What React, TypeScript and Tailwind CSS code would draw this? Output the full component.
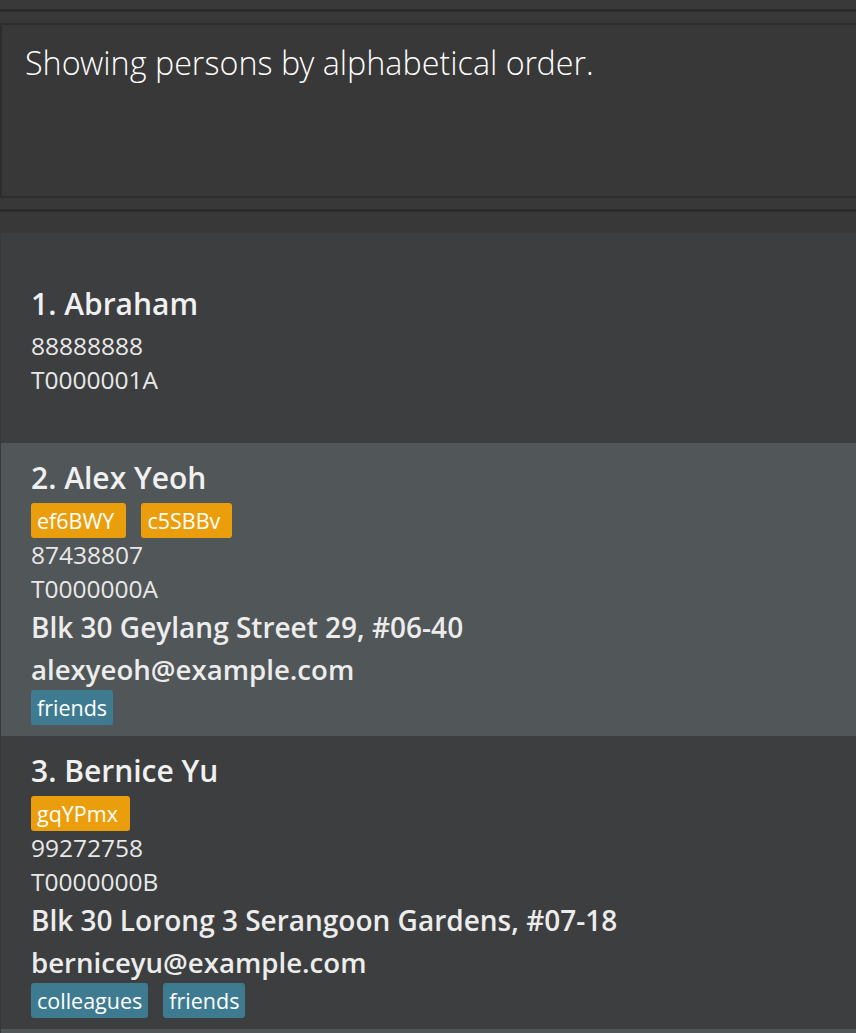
import React from "react";

type Person = {
  name: string;
  codes: string[];
  phone: string;
  nric: string;
  address?: string;
  email?: string;
  tags: string[];
};

const people: Person[] = [
  { name: "1. Abraham", codes: [], phone: "88888888", nric: "T0000001A", tags: [] },
  {
    name: "2. Alex Yeoh",
    codes: ["ef6BWY", "c5SBBv"],
    phone: "87438807",
    nric: "T0000000A",
    address: "Blk 30 Geylang Street 29, #06-40",
    email: "alexyeoh@example.com",
    tags: ["friends"],
  },
  {
    name: "3. Bernice Yu",
    codes: ["gqYPmx"],
    phone: "99272758",
    nric: "T0000000B",
    address: "Blk 30 Lorong 3 Serangoon Gardens, #07-18",
    email: "berniceyu@example.com",
    tags: ["colleagues", "friends"],
  },
];

const font = { fontFamily: '"Open Sans", "Noto Sans", sans-serif' };
const lightFont = {
  fontFamily: '"Open Sans Light", "Noto Sans Light", "Open Sans", "Noto Sans", sans-serif',
};

function Card({ p, odd }: { p: Person; odd: boolean }) {
  const short = !p.address;
  return (
    <div
      className={`flex flex-col px-[30px] ${odd ? "bg-[#515658]" : "bg-[#3c3e3f]"} ${
        short ? "pt-[51px] pb-[46px]" : "pt-[15px] pb-[11px]"
      }`}
    >
      <div className="h-[40px] text-[30px] font-semibold leading-[40px] text-[#f0f0f0] whitespace-nowrap">
        {p.name}
      </div>
      <div className="mt-[5px] flex gap-[15px]">
        {p.codes.map((c) => (
          <span
            key={c}
            className="h-[35px] rounded-[3px] bg-[#eb9e0c] pl-[6px] pr-[12px] text-[21.5px] leading-[35px] text-white"
          >
            {c}
          </span>
        ))}
      </div>
      <div className="text-[24.5px] leading-[34px] text-[#e8e8e8]">{p.phone}</div>
      <div className="text-[24.5px] leading-[34px] text-[#e8e8e8]">{p.nric}</div>
      {p.address && (
        <div className="text-[28px] font-semibold leading-[42px] text-[#ececec] whitespace-nowrap">
          {p.address}
        </div>
      )}
      {p.email && (
        <div className="text-[27.6px] font-semibold leading-[42px] text-[#ececec] whitespace-nowrap">
          {p.email}
        </div>
      )}
      {p.tags.length > 0 && (
        <div className="flex gap-[15px]">
          {p.tags.map((t) => (
            <span
              key={t}
              className="h-[35px] rounded-[3px] bg-[#3e7b91] px-[6px] text-[21.5px] leading-[35px] text-white"
            >
              {t}
            </span>
          ))}
        </div>
      )}
    </div>
  );
}

export default function App() {
  return (
    <div className="flex h-[1033px] w-[856px] flex-col overflow-hidden bg-[#383838]" style={font}>
      <div className="h-[9px] shrink-0 bg-[#393939]" />
      <div className="h-[3px] shrink-0 bg-[#2b2b2b]" />
      <div className="h-[11px] shrink-0" />
      <div className="h-[175px] shrink-0 border-y-2 border-l-2 border-[#2d2d2d] bg-[#383838] pl-[23px] pt-[12px]">
        <div
          className="text-[32.3px] font-light leading-[50px] text-white whitespace-nowrap"
          style={lightFont}
        >
          Showing persons by alphabetical order.
        </div>
      </div>
      <div className="h-[11px] shrink-0" />
      <div className="h-[3px] shrink-0 bg-[#2b2b2b]" />
      <div className="h-[21px] shrink-0" />
      <div className="flex flex-col border-l border-[#383838]">
        {people.map((p, i) => (
          <Card key={p.name} p={p} odd={i % 2 === 1} />
        ))}
        <div className="h-[200px] bg-[#515658]" />
      </div>
    </div>
  );
}
